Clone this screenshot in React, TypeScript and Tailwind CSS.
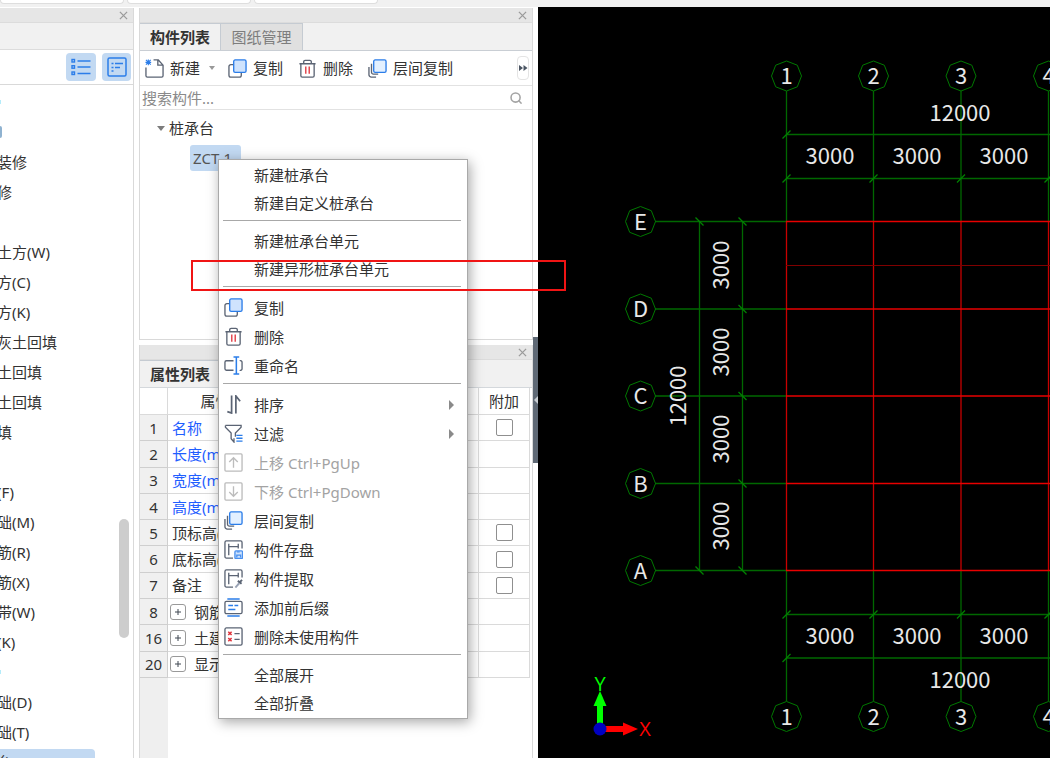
import React from "react";

/* ---------- icons ---------- */

type IconProps = { className?: string };

function Glyph({ children, className = "size-[19px]" }: { children: React.ReactNode; className?: string }) {
  return (
    <svg viewBox="0 0 20 20" fill="none" stroke="#5b6474" strokeWidth="1.4" className={"shrink-0 " + className} aria-hidden="true">
      {children}
    </svg>
  );
}

const CopyIcon = (p: IconProps) => (
  <Glyph {...p}>
    <path d="M6 6H3a2 2 0 0 0-2 2v9a2 2 0 0 0 2 2h9a2 2 0 0 0 2-2v-3" />
    <rect x="6" y="1" width="13" height="13" rx="1.500" fill="#cfe3fd" stroke="#2b7de9" />
  </Glyph>
);

const LayersIcon = (p: IconProps) => (
  <Glyph {...p}>
    <path d="M1 8.500v8a2.500 2.500 0 0 0 2.500 2.500h5" />
    <path d="M3.700 5v9a2 2 0 0 0 2 2h5" />
    <rect x="6" y="1" width="13" height="13" rx="1.500" fill="#e3f0ff" stroke="#2b7de9" />
  </Glyph>
);

const TrashIcon = (p: IconProps) => (
  <Glyph {...p}>
    <path d="M1.500 5h17M6 5V3a1.500 1.500 0 0 1 1.500-1.500h5A1.500 1.500 0 0 1 14 3v2M3 5v12.500A1.500 1.500 0 0 0 4.500 19h11a1.500 1.500 0 0 0 1.500-1.500V5" />
    <path d="M8.200 8v7.500M11.800 8v7.500" stroke="#e0343c" />
  </Glyph>
);

const NewIcon = (p: IconProps) => (
  <Glyph {...p}>
    <path d="M1 9v8.500A1.500 1.500 0 0 0 2.500 19h15a1.500 1.500 0 0 0 1.500-1.500V6.500L14 1H9M13.500 1v5.500H19" />
    <path d="M1 1l5 5M6 1L1 6M3.500 .5v6M.5 3.500h6" stroke="#2b7de9" strokeWidth="1.200" />
  </Glyph>
);

const RenameIcon = () => (
  <Glyph>
    <path d="M10 5H2.500A1.500 1.500 0 0 0 1 6.500v7A1.500 1.500 0 0 0 2.500 15H10M16.500 5A1.800 1.800 0 0 1 19 6.500v7a1.800 1.800 0 0 1-2.500 1.500" />
    <path d="M10 1h6M10 19h6M13 1v18" stroke="#2b7de9" strokeWidth="1.600" />
  </Glyph>
);

const SortIcon = () => (
  <Glyph>
    <path d="M8 .5v18.500L3.500 17.500M12.500 19.500V1L17 6.500" strokeWidth="1.800" />
  </Glyph>
);

const FilterIcon = () => (
  <Glyph>
    <path d="M1.500 1.500h16.500v2L12 9.500v4M1.500 1.500v2L7.500 9.500v6l3 3.500V15" />
    <path d="M13 12h6.500M13 15h6.500M13 18h6.500" stroke="#2b7de9" />
  </Glyph>
);

const UpIcon = () => (
  <Glyph>
    <g stroke="#bcbcbc">
      <rect x="1" y="1" width="18" height="18" rx="1" />
      <path d="M10 15.500V5.500M5.500 9.500L10 5l4.500 4.500" />
    </g>
  </Glyph>
);

const DownIcon = () => (
  <Glyph>
    <g stroke="#bcbcbc">
      <rect x="1" y="1" width="18" height="18" rx="1" />
      <path d="M10 4.500v10M5.500 10.500L10 15l4.500-4.500" />
    </g>
  </Glyph>
);

const SaveIcon = () => (
  <Glyph>
    <path d="M9.500 19h-7A1.500 1.500 0 0 1 1 17.500v-15A1.500 1.500 0 0 1 2.500 1h15A1.500 1.500 0 0 1 19 2.500V9M5 4v12M15 4v5M5 7h10" />
    <rect x="11.500" y="11.500" width="8" height="8" rx="1" fill="#cfe3fd" stroke="#4a90ee" />
    <path d="M13.500 18.500v-2.500h4v2.500M13.500 12.500h3" stroke="#4a90ee" />
  </Glyph>
);

const ExtractIcon = () => (
  <Glyph>
    <path d="M9.500 19h-7A1.500 1.500 0 0 1 1 17.500v-15A1.500 1.500 0 0 1 2.500 1h15A1.500 1.500 0 0 1 19 2.500V9M5 4v12M15 4v5M5 7h10" />
    <path d="M12 19.500l4-4.500" stroke="#9aa3b5" strokeWidth="2" />
    <path d="M14.500 12.500l4 3M16 14.500l3-3" strokeWidth="2" />
  </Glyph>
);

const AffixIcon = () => (
  <Glyph>
    <rect x="1" y="3.500" width="18" height="13" rx="1.500" />
    <path d="M3.500 1h13M3.500 19h13M4.500 8h5M4.500 12h7.500M11 8h4" stroke="#2b7de9" strokeWidth="1.600" />
  </Glyph>
);

const PurgeIcon = () => (
  <Glyph>
    <rect x="1" y="1" width="18" height="18" rx="1.500" />
    <path d="M4.500 5l3.500 3.500M8 5L4.500 8.500M4.500 11.500L8 15M8 11.500L4.500 15" stroke="#e0343c" strokeWidth="1.600" />
    <path d="M11 7h5.500M11 13h5.500" />
  </Glyph>
);

const CloseIcon = () => (
  <svg viewBox="0 0 10 10" className="size-[9px]" stroke="#9a9a9a" strokeWidth="1.4" aria-hidden="true">
    <path d="M1 1l8 8M9 1L1 9" />
  </svg>
);

/* ---------- shared pieces ---------- */

function TitleBar() {
  return (
    <div className="flex h-[15px] shrink-0 items-center justify-end border-b border-[#dcdcdc] bg-[#e6e6e6] pr-[5px]">
      <button aria-label="关闭"><CloseIcon /></button>
    </div>
  );
}

function ToolButton({ icon, label }: { icon: React.ReactNode; label: string }) {
  return (
    <button className="flex items-center gap-1.5 whitespace-nowrap">
      {icon}
      {label}
    </button>
  );
}

/* ---------- left navigation ---------- */

const NAV: string[] = [
  "", "", "装修", "修", "", "土方(W)", "方(C)", "方(K)", "灰土回填", "土回填", "土回填", "填",
  "", "(F)", "础(M)", "筋(R)", "筋(X)", "带(W)", "(K)", "", "础(D)", "础(T)",
];

function NavPanel() {
  return (
    <nav className="relative flex w-[134px] shrink-0 flex-col border-r border-[#d9d9d9] bg-white">
      <TitleBar />
      <div className="h-[27px] shrink-0 border-b border-[#dcdcdc] bg-[#f1f1f1]" />
      <div className="flex h-[35px] shrink-0 items-center justify-end gap-1.5 border-b border-[#d9d9d9] pr-0.5">
        <button aria-label="列表" className="flex h-7 w-[30px] items-center justify-center rounded bg-[#c2d9f2]">
          <svg viewBox="0 0 20 18" className="h-[18px] w-5" fill="none" stroke="#2b7de9" strokeWidth="1.4" aria-hidden="true">
            <path d="M6.500 3h13M6.500 9h13M6.500 15.500h13" />
            <rect x="1" y="1.500" width="2.500" height="2.500" />
            <rect x="1" y="7.700" width="2.500" height="2.500" />
            <rect x="1" y="14" width="2.500" height="2.500" />
          </svg>
        </button>
        <button aria-label="详情" className="flex h-7 w-[29px] items-center justify-center rounded bg-[#c2d9f2]">
          <svg viewBox="0 0 20 20" className="size-5" fill="none" stroke="#2b7de9" strokeWidth="1.5" aria-hidden="true">
            <rect x="1" y="1" width="18" height="18" rx="1.500" />
            <path d="M4.500 6.500h2M8 6.500h8M4.500 10.500h2M8 10.500h5M4.500 14h2" />
          </svg>
        </button>
      </div>
      <ul className="min-h-0 flex-1 overflow-hidden pt-0.5">
        {NAV.map((t, i) => (
          <li key={i} className="flex h-[30px] items-center">
            {i === 1 && <span className="h-3 w-0.5 rounded-r-full bg-[#8fb2d0]" />}
            {(i === 0 || i === 19) && <span className="h-1 w-px bg-[#b5ecfa]" />}
            {t && <a href="#" className="-ml-[3px] whitespace-nowrap">{t}</a>}
          </li>
        ))}
        <li className="flex h-[30px] items-center">
          <a href="#" className="flex h-[26px] w-[95px] items-center rounded-r bg-[#c2d9f2]">
            <span className="-ml-[3px]">台(V)</span>
          </a>
        </li>
      </ul>
      <div className="absolute right-1 top-[511px] h-[119px] w-2.5 rounded-full bg-[#cdcdcd]" />
    </nav>
  );
}

/* ---------- component list ---------- */

function ComponentPanel() {
  return (
    <section className="flex h-[332px] shrink-0 flex-col border border-t-0 border-[#d9d9d9] bg-white">
      <TitleBar />
      <div className="flex h-[28px] shrink-0 border-b border-[#c9ced4] bg-[#f1f1f1]">
        <button className="w-[81px] border-r border-t border-[#c5cbd2] bg-[#f1f1f1] font-bold">构件列表</button>
        <button className="w-[82px] border-r border-t border-[#c5cbd2] bg-[#e0e0e0] text-[#7d7d7d]">图纸管理</button>
      </div>
      <div className="flex h-[35px] shrink-0 items-center border-b border-[#e2e2e2] pl-[5px] pr-[3px]">
        <ToolButton icon={<NewIcon />} label="新建" />
        <button aria-label="更多新建" className="mx-[9px] border-x-[3px] border-t-4 border-x-transparent border-t-[#999]" />
        <div className="ml-1 flex gap-[15px]">
          <ToolButton icon={<CopyIcon />} label="复制" />
          <ToolButton icon={<TrashIcon />} label="删除" />
          <ToolButton icon={<LayersIcon />} label="层间复制" />
        </div>
        <button aria-label="更多工具" className="ml-auto flex h-6 w-3 items-center justify-center rounded border border-[#e4e4e4]">
          <svg viewBox="0 0 10 6" className="h-1.5 w-2.5 shrink-0" fill="#4b5563" aria-hidden="true">
            <path d="M1 0l4 3-4 3zM5.500 0l4 3-4 3z" />
          </svg>
        </button>
      </div>
      <div className="flex h-6 shrink-0 items-center border-b border-[#e2e2e2] pl-0.5 pr-2.5">
        <input aria-label="搜索构件" placeholder="搜索构件..." className="h-[22px] min-w-0 flex-1 outline-none placeholder:text-[#8a8a8a]" />
        <svg viewBox="0 0 14 14" className="size-3" fill="none" stroke="#a3a3a3" strokeWidth="1.8" aria-hidden="true">
          <circle cx="6.500" cy="6.500" r="5.300" />
          <path d="M10 10l3.500 3.500" />
        </svg>
      </div>
      <div className="pl-[17px] pt-[3px]">
        <div className="flex h-[30px] items-center gap-1">
          <span className="border-x-4 border-t-[5px] border-x-transparent border-t-[#7c7c7c]" />
          桩承台
        </div>
        <div className="flex h-[30px] items-center pl-[33px]">
          <button className="h-[26px] w-[51px] rounded-[3px] bg-[#c2d9f2] pl-[3px] text-left text-[#555]">ZCT-1</button>
        </div>
      </div>
    </section>
  );
}

/* ---------- property list ---------- */

type Row = { no: number; name: string; link?: boolean; box?: boolean; group?: boolean };

const ROWS: Row[] = [
  { no: 1, name: "名称", link: true, box: true },
  { no: 2, name: "长度(mm)", link: true },
  { no: 3, name: "宽度(mm)", link: true },
  { no: 4, name: "高度(mm)", link: true },
  { no: 5, name: "顶标高(m)", box: true },
  { no: 6, name: "底标高(m)", box: true },
  { no: 7, name: "备注", box: true },
  { no: 8, name: "钢筋", group: true },
  { no: 16, name: "土建", group: true },
  { no: 20, name: "显示", group: true },
];

function PropertyPanel() {
  return (
    <section className="flex min-h-0 flex-1 flex-col overflow-hidden border-x border-[#d9d9d9] bg-white">
      <TitleBar />
      <div className="flex h-[28px] shrink-0 border-b border-[#d4d8dc] bg-[#f1f1f1]">
        <button className="w-[81px] border-r border-t border-[#c5cbd2] bg-[#f1f1f1] font-bold">属性列表</button>
      </div>
      <table className="h-[290px] w-[390px] shrink-0 table-fixed border-separate border-spacing-0">
        <colgroup>
          <col className="w-7" />
          <col className="w-[126px]" />
          <col />
          <col className="w-[51px]" />
        </colgroup>
        <thead>
          <tr className="h-[27px]">
            <th className="border-b border-r border-[#dadada] p-0" />
            <th className="border-b border-r border-[#dadada] p-0 font-normal">属性名称</th>
            <th className="border-b border-r border-[#dadada] p-0" />
            <th className="border-b border-r border-[#dadada] p-0 font-normal">附加</th>
          </tr>
        </thead>
        <tbody>
          {ROWS.map((r) => (
            <tr key={r.no} className="h-[26px]">
              <td className="border-b border-r border-[#cfcfcf] bg-[#f0f0f0] p-0 text-center">{r.no}</td>
              <td className={r.link ? "border-b border-[#dadada] p-0 pl-1 text-[#1f5eff]" : "border-b border-[#dadada] p-0 pl-1"}>
                <div className="flex items-center whitespace-nowrap">
                  {r.group && (
                    <button aria-label={"展开" + r.name} className="-ml-0.5 mr-2 flex size-4 items-center justify-center rounded-[3px] border border-[#999]">
                      <svg viewBox="0 0 8 8" className="size-2" stroke="#3f4650" aria-hidden="true">
                        <path d="M1 4h6M4 1v6" />
                      </svg>
                    </button>
                  )}
                  {r.name}
                </div>
              </td>
              <td className="border-b border-r border-[#dadada] p-0" />
              <td className="border-b border-r border-[#dadada] p-0">
                {r.box && (
                  <input
                    type="checkbox"
                    aria-label={"附加 " + r.name}
                    className="mx-auto block size-[17px] appearance-none rounded-[2px] border border-[#8f8f8f] bg-white"
                  />
                )}
              </td>
            </tr>
          ))}
        </tbody>
      </table>
      <div className="w-7 flex-1 bg-[#efefef]" />
    </section>
  );
}

/* ---------- context menu ---------- */

type Item = { label: string; icon?: React.ReactNode; sub?: boolean; disabled?: boolean };

const GROUPS: Item[][] = [
  [{ label: "新建桩承台" }, { label: "新建自定义桩承台" }],
  [{ label: "新建桩承台单元" }, { label: "新建异形桩承台单元" }],
  [
    { label: "复制", icon: <CopyIcon /> },
    { label: "删除", icon: <TrashIcon /> },
    { label: "重命名", icon: <RenameIcon /> },
  ],
  [
    { label: "排序", icon: <SortIcon />, sub: true },
    { label: "过滤", icon: <FilterIcon />, sub: true },
    { label: "上移 Ctrl+PgUp", icon: <UpIcon />, disabled: true },
    { label: "下移 Ctrl+PgDown", icon: <DownIcon />, disabled: true },
    { label: "层间复制", icon: <LayersIcon /> },
    { label: "构件存盘", icon: <SaveIcon /> },
    { label: "构件提取", icon: <ExtractIcon /> },
    { label: "添加前后缀", icon: <AffixIcon /> },
    { label: "删除未使用构件", icon: <PurgeIcon /> },
  ],
  [{ label: "全部展开" }, { label: "全部折叠" }],
];

function ContextMenu() {
  return (
    <div role="menu" className="absolute left-[218px] top-[159px] w-[250px] border border-[#a9a9a9] bg-white py-px shadow-[2px_3px_12px_rgba(0,0,0,0.35)]">
      {GROUPS.map((g, i) => (
        <div key={i}>
          {i > 0 && <div role="separator" className="mb-1.5 ml-1 mr-1.5 mt-[3px] h-px bg-[#a8a8a8]" />}
          {g.map((it) => (
            <button
              key={it.label}
              role="menuitem"
              disabled={it.disabled}
              className={
                (it.icon ? "h-[29px] " : "h-7 ") +
                "flex w-full items-center pl-[5px] pr-[13px] text-left disabled:text-[#a3a3a3]"
              }
            >
              <span className="mr-[11px] flex w-[19px] items-center">{it.icon}</span>
              {it.label}
              {it.sub && <span className="ml-auto border-y-[5px] border-l-[5px] border-y-transparent border-l-[#8a8a8a]" />}
            </button>
          ))}
        </div>
      ))}
    </div>
  );
}

/* ---------- drawing canvas ---------- */

const COLS = [248.5, 335.5, 423, 510.5];
const LINES = [
  { y: 214.5, label: "E" },
  { y: 302, label: "D" },
  { y: 389, label: "C" },
  { y: 476.5, label: "B" },
  { y: 563.5, label: "A" },
];

function Bubble({ x, y, label }: { x: number; y: number; label: string }) {
  return (
    <g>
      <path
        transform={`translate(${x} ${y})`}
        d="M0-15L10.800-10.800L15 0L10.800 10.800L0 15L-10.800 10.800L-15 0L-10.800-10.800Z"
        fill="none"
        stroke="#007800"
      />
      <text x={x} y={y + 8} textAnchor="middle" fill="#e8e8e8">{label}</text>
    </g>
  );
}

function Tick({ x, y, flip }: { x: number; y: number; flip?: boolean }) {
  const d = flip ? -4 : 4;
  return <path d={`M${x - 4} ${y + d}L${x + 4} ${y - d}`} stroke="#008200" strokeWidth="1.3" />;
}

function Canvas() {
  return (
    <main className="min-w-0 flex-1 overflow-hidden bg-black">
      <svg className="block h-full w-full font-['Noto_Sans_CJK_SC',sans-serif] text-[22px]" role="img" aria-label="轴网">
        <g stroke="#006800" strokeWidth="1.3">
          {COLS.map((x) => (
            <path key={x} d={`M${x} 84V214M${x} 564V694`} />
          ))}
          {LINES.map((l) => (
            <path key={l.label} d={`M117 ${l.y}H248`} />
          ))}
          <path d="M248 127.500H600M248 171.500H600M248 607.500H600M248 651H600M161.500 214V564M204.500 214V564" />
        </g>
        <g strokeWidth="1.3" stroke="#c80000">
          {COLS.map((x) => (
            <path key={x} d={`M${x} 214V564`} />
          ))}
          <path d="M248 258.500H600" stroke="#800000" strokeWidth="1" />
          {LINES.map((l) => (
            <path key={l.label} d={`M248 ${l.y}H600`} stroke="#e80000" />
          ))}
        </g>
        {COLS.map((x) => (
          <g key={x}>
            <Tick x={x} y={171.5} />
            <Tick x={x} y={607.5} />
          </g>
        ))}
        <Tick x={248.5} y={127.5} />
        <Tick x={248.5} y={651} />
        <Tick x={161.5} y={214.5} flip />
        <Tick x={161.5} y={563.5} flip />
        {LINES.map((l) => (
          <Tick key={l.label} x={204.5} y={l.y} flip />
        ))}
        {COLS.map((x, i) => (
          <g key={x}>
            <Bubble x={x} y={69} label={String(i + 1)} />
            <Bubble x={x} y={709.5} label={String(i + 1)} />
          </g>
        ))}
        {LINES.map((l) => (
          <Bubble key={l.label} x={102.5} y={l.y} label={l.label} />
        ))}
        <g textAnchor="middle" fill="#e8e8e8">
          {[292, 379, 466].map((x) => (
            <g key={x}>
              <text x={x} y="157">3000</text>
              <text x={x} y="637">3000</text>
            </g>
          ))}
          <text x="422" y="114">12000</text>
          <text x="422" y="681">12000</text>
          {[258, 345, 432, 519].map((y) => (
            <text key={y} transform={`translate(191 ${y}) rotate(-90)`}>3000</text>
          ))}
          <text transform="translate(148 389) rotate(-90)">12000</text>
        </g>
        <path d="M62 718V698" stroke="#00ff00" strokeWidth="6" />
        <path d="M62 684L68.500 699H55.500Z" fill="#00ff00" />
        <path d="M66 722H86" stroke="#ff0000" strokeWidth="6" />
        <path d="M85 715.500L100 722L85 728.500Z" fill="#ff0000" />
        <circle cx="62" cy="722" r="6.500" fill="#0000c0" />
        <g className="font-['Liberation_Sans_Narrow','Open_Sans',sans-serif] text-[20px]" textAnchor="middle">
          <text x="62" y="684" fill="#00ff00">Y</text>
          <text x="107" y="729" fill="#ff0000">X</text>
        </g>
      </svg>
    </main>
  );
}

/* ---------- page ---------- */

export default function App() {
  return (
    <div className="relative flex h-screen flex-col overflow-hidden bg-white font-['Noto_Sans','Noto_Sans_CJK_SC',sans-serif] text-[15px] leading-5 text-[#333]">
      <header className="flex h-[7px] shrink-0 gap-[3px] bg-[#f1f1f1]">
        <div className="h-1 w-[124px] rounded-b border border-t-0 border-[#dedede] bg-white" />
        <div className="h-1 w-[124px] rounded-b border border-t-0 border-[#dedede] bg-white" />
        <div className="h-1 w-[124px] rounded-b border border-t-0 border-[#dedede] bg-white" />
      </header>
      <div className="flex min-h-0 flex-1">
        <div className="flex shrink-0 pt-px">
          <NavPanel />
          <div className="ml-[5px] flex w-[394px] flex-col gap-[5px]">
            <ComponentPanel />
            <PropertyPanel />
          </div>
          <div className="w-[5px] pt-[329px]">
            <button aria-label="收起面板" className="flex h-[126px] w-full items-center justify-end bg-[#5f6975]">
              <span className="border-y-4 border-r-4 border-y-transparent border-r-[#c8cdd2]" />
            </button>
          </div>
        </div>
        <Canvas />
      </div>
      <ContextMenu />
      <div className="pointer-events-none absolute left-[191px] top-[260px] h-[31px] w-[375px] border-2 border-[#f01414]" />
    </div>
  );
}
